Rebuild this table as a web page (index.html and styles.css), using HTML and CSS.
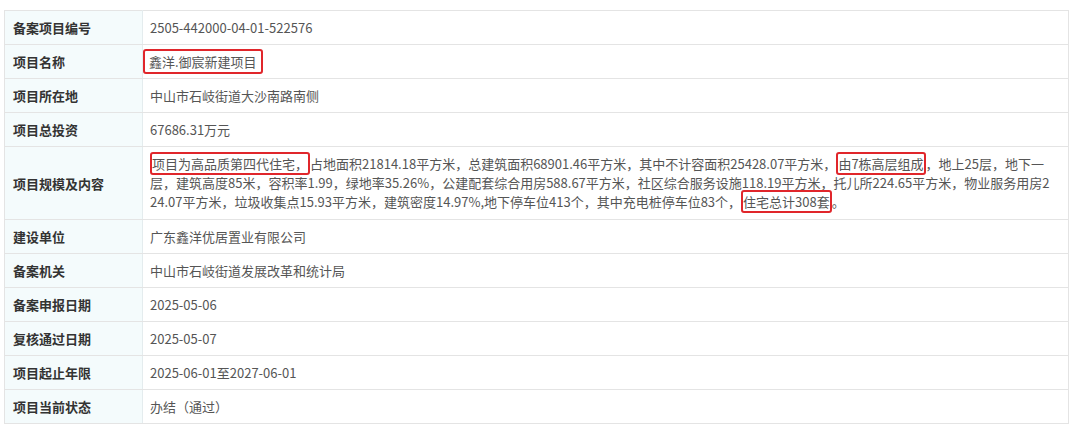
FILE: index.html
```html
<!DOCTYPE html>
<html lang="zh-CN">
<head>
    <meta charset="UTF-8">
    <title>项目备案信息</title>
    <link rel="stylesheet" href="styles.css">
</head>
<body>
    <div class="container">
        <table class="info-table">
            <tr>
                <th>备案项目编号</th>
                <td>2505-442000-04-01-522576</td>
            </tr>
            <tr>
                <th>项目名称</th>
                <td><span class="mark mark-name">鑫洋.御宸新建项目</span></td>
            </tr>
            <tr>
                <th>项目所在地</th>
                <td>中山市石岐街道大沙南路南侧</td>
            </tr>
            <tr>
                <th>项目总投资</th>
                <td>67686.31万元</td>
            </tr>
            <tr>
                <th>项目规模及内容</th>
                <!-- 按原页面的换行位置断行 -->
                <td class="content"><span class="mark">项目为高品质第四代住宅，</span>占地面积21814.18平方米，总建筑面积68901.46平方米，其中不计容面积25428.07平方米，<span class="mark">由7栋高层组成</span>，地上25层，地下一<br>层，建筑高度85米，容积率1.99，绿地率35.26%，公建配套综合用房588.67平方米，社区综合服务设施118.19平方米，托儿所224.65平方米，物业服务用房2<br>24.07平方米，垃圾收集点15.93平方米，建筑密度14.97%,地下停车位413个，其中充电桩停车位83个，<span class="mark">住宅总计308套</span>。</td>
            </tr>
            <tr>
                <th>建设单位</th>
                <td>广东鑫洋优居置业有限公司</td>
            </tr>
            <tr>
                <th>备案机关</th>
                <td>中山市石岐街道发展改革和统计局</td>
            </tr>
            <tr>
                <th>备案申报日期</th>
                <td>2025-05-06</td>
            </tr>
            <tr>
                <th>复核通过日期</th>
                <td>2025-05-07</td>
            </tr>
            <tr>
                <th>项目起止年限</th>
                <td>2025-06-01至2027-06-01</td>
            </tr>
            <tr>
                <th>项目当前状态</th>
                <td>办结（通过）</td>
            </tr>
        </table>
    </div>
</body>
</html>
```

FILE: styles.css
```css
* {
    margin: 0;
    padding: 0;
    box-sizing: border-box;
}

body {
    font-family: "Microsoft YaHei", "Noto Sans CJK SC", sans-serif;
    background-color: #fff;
    color: #555;
    font-size: 13px;
}

.container {
    padding: 10px 11px 0 4px;
}

.info-table {
    width: 1065px;
    border-collapse: collapse;
    border: 1px solid #e4e4e4;
}

.info-table th,
.info-table td {
    height: 34px;
    border-top: 1px solid #e4e4e4;
    border-bottom: 1px solid #e4e4e4;
    padding: 0 7px;
    line-height: 19px;
    text-align: left;
    vertical-align: middle;
}

.info-table th {
    width: 138px;
    padding-left: 8px;
    background-color: #f4fbfc;
    color: #333;
    font-weight: bold;
    border-right: 1px solid #e4ecee;
}

.info-table td {
    color: #555;
    white-space: nowrap;
}

.info-table td.content {
    padding-top: 7px;
    padding-bottom: 8px;
}

.mark {
    border: 2px solid #e0262b;
    border-radius: 3px;
}

.mark-name {
    display: inline-block;
    margin: -3px 0 -3px -7px;
    padding: 1px 4px;
    line-height: 19px;
}
```
